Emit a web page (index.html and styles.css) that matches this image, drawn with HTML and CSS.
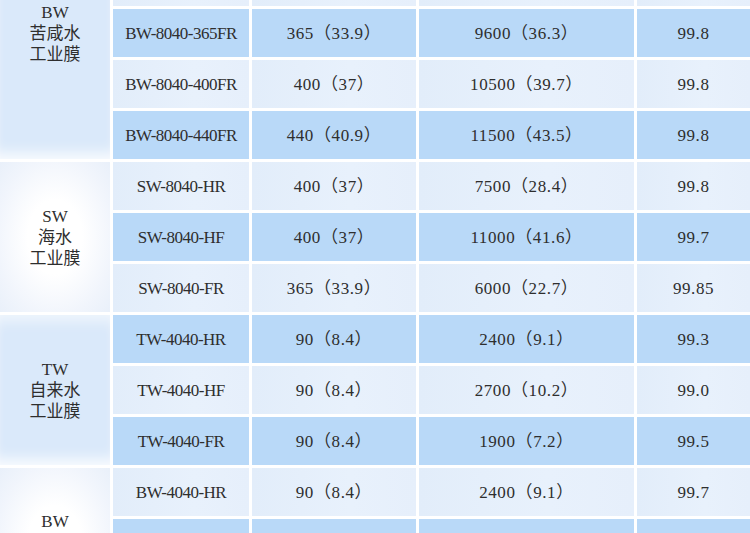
FILE: index.html
```html
<!DOCTYPE html>
<html lang="zh-CN">
<head>
<meta charset="utf-8">
<title>膜元件参数表</title>
<link rel="stylesheet" href="styles.css">
</head>
<body>
<div class="table">
  <div class="group blue g5"><span>BW</span><span>苦咸水</span><span>工业膜</span></div>
  <div class="row dark"><div class="cell code"></div><div class="cell"></div><div class="cell"></div><div class="cell"></div></div>
  <div class="row light"><div class="cell code"></div><div class="cell"></div><div class="cell"></div><div class="cell"></div></div>
  <div class="row dark"><div class="cell code">BW-8040-365FR</div><div class="cell">365（33.9）</div><div class="cell">9600（36.3）</div><div class="cell">99.8</div></div>
  <div class="row light"><div class="cell code">BW-8040-400FR</div><div class="cell">400（37）</div><div class="cell">10500（39.7）</div><div class="cell">99.8</div></div>
  <div class="row dark"><div class="cell code">BW-8040-440FR</div><div class="cell">440（40.9）</div><div class="cell">11500（43.5）</div><div class="cell">99.8</div></div>

  <div class="group white g3"><span>SW</span><span>海水</span><span>工业膜</span></div>
  <div class="row light"><div class="cell code">SW-8040-HR</div><div class="cell">400（37）</div><div class="cell">7500（28.4）</div><div class="cell">99.8</div></div>
  <div class="row dark"><div class="cell code">SW-8040-HF</div><div class="cell">400（37）</div><div class="cell">11000（41.6）</div><div class="cell">99.7</div></div>
  <div class="row light"><div class="cell code">SW-8040-FR</div><div class="cell">365（33.9）</div><div class="cell">6000（22.7）</div><div class="cell">99.85</div></div>

  <div class="group blue g3"><span>TW</span><span>自来水</span><span>工业膜</span></div>
  <div class="row dark"><div class="cell code">TW-4040-HR</div><div class="cell">90（8.4）</div><div class="cell">2400（9.1）</div><div class="cell">99.3</div></div>
  <div class="row light"><div class="cell code">TW-4040-HF</div><div class="cell">90（8.4）</div><div class="cell">2700（10.2）</div><div class="cell">99.0</div></div>
  <div class="row dark"><div class="cell code">TW-4040-FR</div><div class="cell">90（8.4）</div><div class="cell">1900（7.2）</div><div class="cell">99.5</div></div>

  <div class="group white g3 last"><span>BW</span></div>
  <div class="row light"><div class="cell code">BW-4040-HR</div><div class="cell">90（8.4）</div><div class="cell">2400（9.1）</div><div class="cell">99.7</div></div>
  <div class="row dark"><div class="cell code"></div><div class="cell"></div><div class="cell"></div><div class="cell"></div></div>
  <div class="row light"><div class="cell code"></div><div class="cell"></div><div class="cell"></div><div class="cell"></div></div>
</div>
</body>
</html>
```

FILE: styles.css
```css
html, body {
  margin: 0;
  padding: 0;
  background: #ffffff;
  overflow: hidden;
}

body {
  width: 750px;
  height: 533px;
  font-family: "Liberation Serif", "Noto Sans CJK SC", serif;
  font-size: 17px;
  color: #2e2e2e;
}

.table {
  display: grid;
  grid-template-columns: 110px 136px 164px 215px 113px;
  grid-auto-rows: 48px;
  gap: 3px;
  margin-top: -93px;
}

.row {
  display: contents;
}

.cell {
  display: flex;
  align-items: center;
  justify-content: center;
  white-space: nowrap;
  line-height: 20px;
  letter-spacing: 0.6px;
  padding-top: 1px;
}

.cell.code {
  letter-spacing: -0.5px;
}

.dark > .cell {
  background: #b9d9f8;
}

.light > .cell {
  background: linear-gradient(90deg, #e2edfa 0%, #e8f1fc 60%, #e6effb 100%);
}

.group {
  display: flex;
  flex-direction: column;
  align-items: center;
  justify-content: center;
  line-height: 21px;
}

.g5 {
  grid-row: span 5;
}

.g3 {
  grid-row: span 3;
}

.last {
  justify-content: flex-start;
  padding-top: 43px;
}

.blue {
  background: #dae9fa;
  box-shadow: inset 0 -14px 14px -8px rgba(255, 255, 255, 0.85),
              inset 0 14px 14px -8px rgba(255, 255, 255, 0.6);
}

.white {
  background: radial-gradient(ellipse at 50% 50%, #ffffff 35%, #f1f5fc 75%, #e9f0fa 100%);
}
```
